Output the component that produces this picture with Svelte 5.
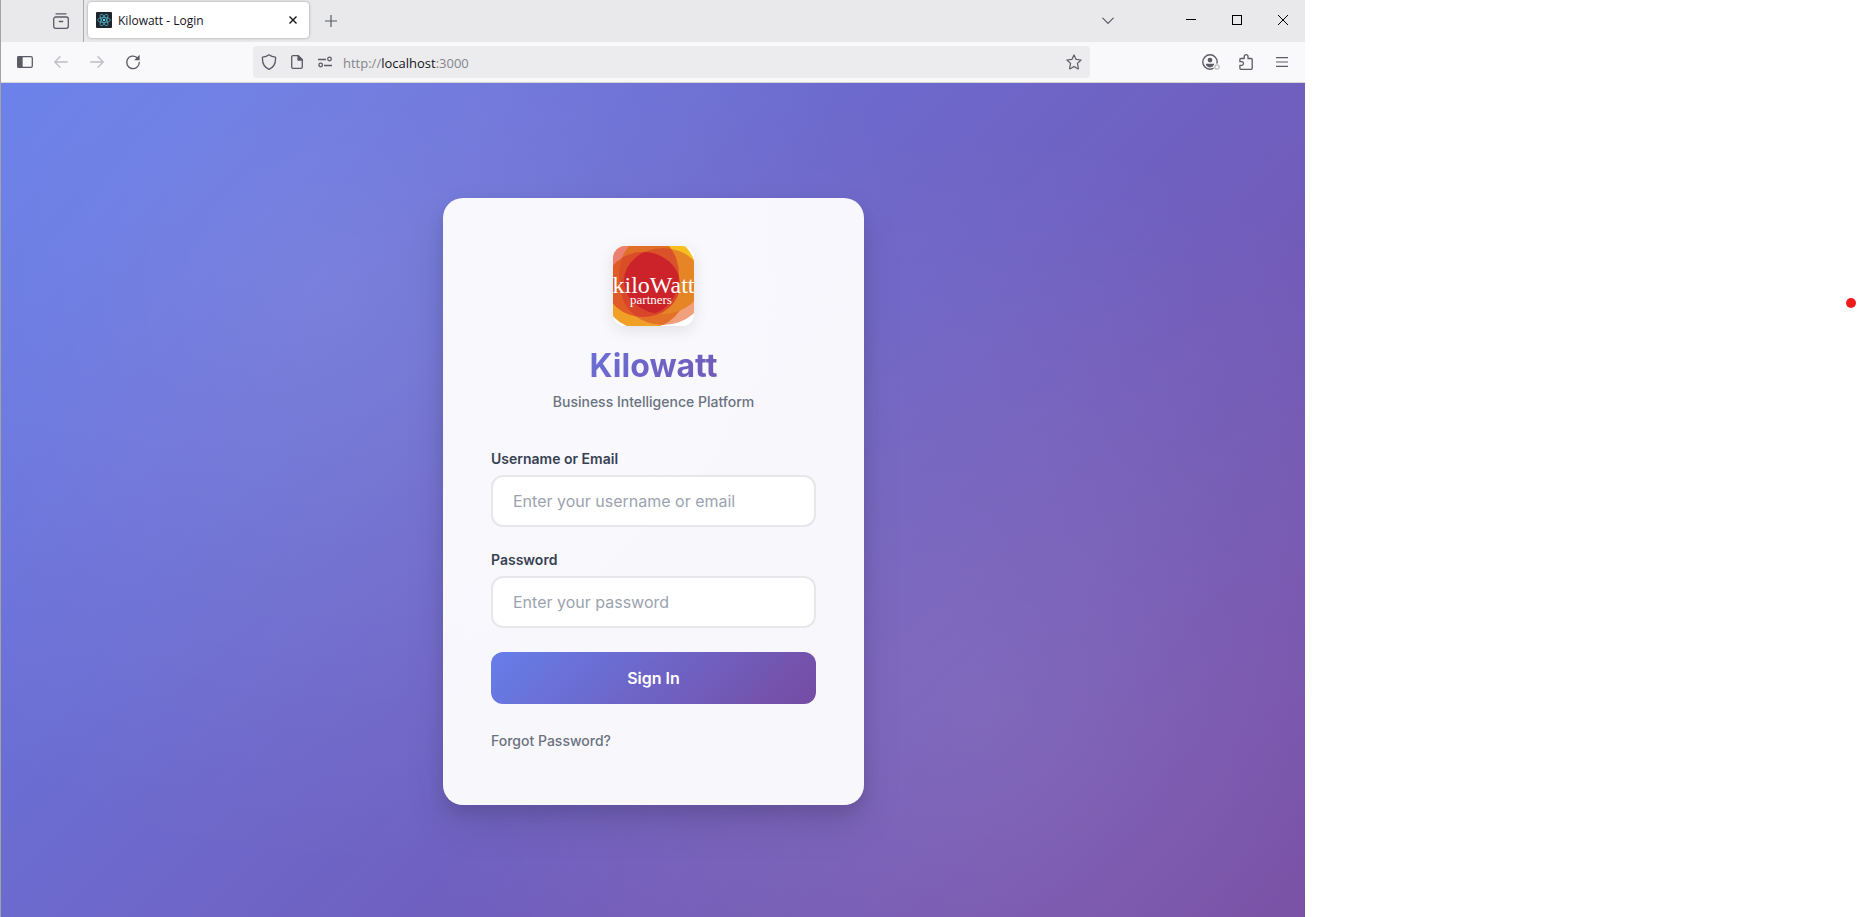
<script>
  let username = $state('');
  let password = $state('');
</script>

<svelte:head><title>Kilowatt - Login</title></svelte:head>

<div class="desktop">
  <div class="window">
    <header class="tabbar">
      <button class="tool" aria-label="Recent tabs">
        <svg width="16" height="16" viewBox="0 0 16 16" fill="none" stroke="#5b5b66" stroke-width="1.3" stroke-linecap="round">
          <path d="M3 0.8h10" />
          <path d="M0.700 6a2 2 0 0 1 2-2h10.600a2 2 0 0 1 2 2v7.300a2 2 0 0 1-2 2H2.700a2 2 0 0 1-2-2z" />
          <path d="M6.300 8.500h3.400" />
        </svg>
      </button>
      <div class="tab">
        <svg width="16" height="16" viewBox="0 0 16 16" fill="none" stroke="#4fb3cc" stroke-width="0.8">
          <rect width="16" height="16" rx="1" fill="#20232a" stroke="none" />
          <ellipse cx="8" cy="8" rx="6.4" ry="2.5" />
          <ellipse cx="8" cy="8" rx="6.4" ry="2.5" transform="rotate(60 8 8)" />
          <ellipse cx="8" cy="8" rx="6.4" ry="2.5" transform="rotate(120 8 8)" />
          <circle cx="8" cy="8" r="1.2" fill="#61dafb" stroke="none" />
        </svg>
        <span class="tab-title">Kilowatt - Login</span>
        <button class="tab-close" aria-label="Close tab">
          <svg width="8" height="8" viewBox="0 0 8 8" fill="none" stroke="#15141a" stroke-width="1.4"><path d="M0.5 0.5l7 7M7.5 0.5l-7 7" /></svg>
        </button>
      </div>
      <button class="tool" aria-label="New tab">
        <svg width="12" height="12" viewBox="0 0 12 12" fill="none" stroke="#5b5b66" stroke-width="1.2"><path d="M6 0v12M0 6h12" /></svg>
      </button>
      <span class="spacer"></span>
      <button class="tool all-tabs" aria-label="List all tabs">
        <svg width="12" height="8" viewBox="0 0 12 8" fill="none" stroke="#5b5b66" stroke-width="1.2" stroke-linecap="round" stroke-linejoin="round"><path d="M0.8 1.2L6 6.4l5.200-5.200" /></svg>
      </button>
      <button class="control" aria-label="Minimize">
        <svg width="10" height="10" viewBox="0 0 10 10" stroke="#000"><path d="M0 4.500h10" /></svg>
      </button>
      <button class="control" aria-label="Maximize">
        <svg width="10" height="10" viewBox="0 0 10 10" fill="none" stroke="#000"><rect x="0.5" y="0.5" width="9" height="9" /></svg>
      </button>
      <button class="control" aria-label="Close">
        <svg width="10" height="10" viewBox="0 0 10 10" stroke="#000"><path d="M0 0l10 10M10 0L0 10" /></svg>
      </button>
    </header>

    <nav class="toolbar" aria-label="Navigation">
      <button class="tool" aria-label="Sidebar">
        <svg width="16" height="12" viewBox="0 0 16 12" fill="none" stroke="#5b5b66" stroke-width="1.3"><rect x="0.7" y="0.7" width="14.600" height="10.600" rx="1.400" /><path d="M1 1h4v10H1z" fill="#5b5b66" /></svg>
      </button>
      <button class="tool" aria-label="Back" disabled>
        <svg width="14" height="12" viewBox="0 0 14 12" fill="none" stroke="#bdbdc3" stroke-width="1.3" stroke-linecap="round" stroke-linejoin="round"><path d="M13.300 6H0.9M6 0.8L0.800 6 6 11.200" /></svg>
      </button>
      <button class="tool" aria-label="Forward" disabled>
        <svg width="14" height="12" viewBox="0 0 14 12" fill="none" stroke="#bdbdc3" stroke-width="1.3" stroke-linecap="round" stroke-linejoin="round"><path d="M0.700 6h12.400M8 0.800L13.200 6 8 11.200" /></svg>
      </button>
      <button class="tool" aria-label="Reload">
        <svg width="16" height="16" viewBox="0 0 16 16" fill="none" stroke="#5b5b66" stroke-width="1.3" stroke-linecap="round"><path d="M14.300 8.300A6.300 6.300 0 1 1 11.900 3.400" /><path d="M14.600 0.800v5.400H9.200z" fill="#5b5b66" stroke="none" /></svg>
      </button>

      <div class="urlbar">
        <button class="chip" aria-label="Tracking protection">
          <svg width="16" height="16" viewBox="0 0 16 16" fill="none" stroke="#5b5b66" stroke-width="1.3" stroke-linejoin="round"><path d="M8 0.800C6.200 2.300 3.700 3 1.500 3.100 1.100 8.500 2.600 13 8 15.300 13.400 13 14.900 8.500 14.500 3.100 12.300 3 9.800 2.300 8 0.800z" /></svg>
        </button>
        <button class="chip" aria-label="Site information">
          <svg width="12" height="14" viewBox="0 0 12 14" fill="none" stroke="#5b5b66" stroke-width="1.300" stroke-linejoin="round"><path d="M2 0.700h5.300l4 4V12a1.300 1.300 0 0 1-1.300 1.300H2A1.300 1.300 0 0 1 0.700 12V2A1.300 1.300 0 0 1 2 0.700z" /><path d="M7 0.700v4.300h4.300z" fill="#5b5b66" /></svg>
        </button>
        <button class="chip" aria-label="Permissions">
          <svg width="14" height="12" viewBox="0 0 14 12" fill="none" stroke="#5b5b66" stroke-width="1.300"><path d="M0 3.500h8M6 9.500h8" /><circle cx="11.500" cy="3" r="1.800" /><circle cx="2.700" cy="9" r="1.800" /></svg>
        </button>
        <span class="address">http://<b>localhost</b>:3000</span>
        <button class="chip star" aria-label="Bookmark this page">
          <svg width="16" height="16" viewBox="0 0 16 16" fill="none" stroke="#5b5b66" stroke-width="1.200" stroke-linejoin="round"><path d="M8 0.900l2.100 4.500 5 .6-3.700 3.400 1 4.900a.5.5 0 0 1-.7.500L8 12.400l-3.700 2.400a.5.5 0 0 1-.7-.5l1-4.900L.9 6l5-.6z" /></svg>
        </button>
      </div>

      <button class="tool" aria-label="Account">
        <svg class="account" width="16" height="16" viewBox="0 0 16 16" fill="none"><circle cx="8" cy="8" r="7.200" stroke="#5b5b66" stroke-width="1.400" /><circle cx="8" cy="6.100" r="2.400" fill="#5b5b66" /><path d="M3.800 9.800h8.400c0 2-1.900 3.600-4.200 3.600s-4.200-1.600-4.200-3.600z" fill="#5b5b66" /><circle cx="15" cy="13" r="3.600" fill="#f9f9fb" /><circle cx="15" cy="13" r="2.200" stroke="#b9b9bf" stroke-width="1.200" /></svg>
      </button>
      <button class="tool" aria-label="Extensions">
        <svg width="14" height="16" viewBox="0 0 14 16" fill="none" stroke="#5b5b66" stroke-width="1.300" stroke-linejoin="round"><path d="M5.200 4.500V2.600a1.900 1.900 0 0 1 3.800 0v1.900h3.200a1 1 0 0 1 1 1v8.800a1 1 0 0 1-1 1H1.900a1 1 0 0 1-1-1v-3h1.800a1.800 1.800 0 0 0 0-3.600H.9V5.500a1 1 0 0 1 1-1z" /></svg>
      </button>
      <button class="tool" aria-label="Application menu">
        <svg width="12" height="10" viewBox="0 0 12 10" stroke="#5b5b66" stroke-width="1.200"><path d="M0 0.600h12M0 5h12M0 9.400h12" /></svg>
      </button>
    </nav>

    <main class="page">
      <form class="card" onsubmit={(e) => e.preventDefault()}>
        <svg class="logo" width="81" height="80" viewBox="0 0 81 80" role="img" aria-label="kiloWatt partners">
          <defs>
            <clipPath id="bottom"><circle cx="31" cy="40" r="43.500" /></clipPath>
            <clipPath id="left"><ellipse cx="30" cy="38.500" rx="37" ry="32.500" /></clipPath>
            <clipPath id="tall"><ellipse cx="36" cy="29" rx="30" ry="39" /></clipPath>
          </defs>
          <rect width="81" height="80" fill="#fff" />
          <circle cx="40" cy="30" r="44" fill="#f5bf1e" />
          <circle cx="6" cy="6" r="26" fill="#ec8070" />
          <path d="M0 20V70.500A43.500 43.500 0 0 0 14 80H48L66 60V20z" fill="#f0a024" />
          <ellipse cx="50" cy="42" rx="42" ry="37" fill="#f0a07c" />
          <g clip-path="url(#bottom)"><ellipse cx="50" cy="42" rx="42" ry="37" fill="#e27027" /></g>
          <ellipse cx="36" cy="29" rx="30" ry="39" fill="#e06f27" />
          <ellipse cx="50" cy="35" rx="39" ry="33" fill="#e58526" />
          <ellipse cx="30" cy="38.500" rx="37" ry="32.500" fill="#df5c26" />
          <g clip-path="url(#tall)">
            <ellipse cx="50" cy="35" rx="39" ry="33" fill="#da5229" />
            <ellipse cx="30" cy="38.500" rx="37" ry="32.500" fill="#d94d28" />
          </g>
          <g clip-path="url(#left)"><ellipse cx="50" cy="42" rx="42" ry="37" fill="#d8452a" /></g>
          <g clip-path="url(#left)"><g clip-path="url(#tall)"><ellipse cx="50" cy="35" rx="39" ry="33" fill="#cc2229" /></g></g>
          <text class="logo-name" x="40.500" y="47" text-anchor="middle">kiloWatt</text>
          <text class="logo-sub" x="38" y="58" text-anchor="middle">partners</text>
        </svg>
        <h1>Kilowatt</h1>
        <p class="tagline">Business Intelligence Platform</p>

        <div class="field">
          <label for="username">Username or Email</label>
          <input id="username" type="text" placeholder="Enter your username or email" bind:value={username} />
        </div>
        <div class="field">
          <label for="password">Password</label>
          <input id="password" type="password" placeholder="Enter your password" bind:value={password} />
        </div>
        <button class="submit" type="submit">Sign In</button>
        <a class="forgot" href="#forgot">Forgot Password?</a>
      </form>
    </main>
  </div>
  <aside class="outside"><span class="dot"></span></aside>
</div>

<style>
  :global(body) {
    background: #fff;
  }
  .desktop {
    display: grid;
    grid-template-columns: minmax(0, 1fr) 552px;
    min-height: 100vh;
  }
  .desktop * {
    box-sizing: border-box;
  }
  button {
    font: inherit;
    border: 0;
    padding: 0;
    background: none;
    display: flex;
    align-items: center;
    justify-content: center;
  }
  svg {
    display: block;
    flex: none;
  }
  .window {
    display: flex;
    flex-direction: column;
    border-left: 1px solid #a3a3a5;
    font-family: 'Open Sans', 'Noto Sans', sans-serif;
  }
  .tabbar {
    display: flex;
    align-items: center;
    height: 42px;
    padding-left: 42px;
    background: #e9e9eb;
  }
  .tool {
    width: 36px;
    height: 32px;
    flex: none;
  }
  .account {
    overflow: visible;
  }
  .tab {
    position: relative;
    display: flex;
    align-items: center;
    gap: 6px;
    width: 221px;
    height: 36px;
    margin: 0 4px 2px 9px;
    padding: 0 4px 0 8px;
    border-radius: 4px;
    background: #fff;
    box-shadow: 0 0 3px rgba(0, 0, 0, 0.35);
  }
  .tab::before {
    content: '';
    position: absolute;
    left: -5px;
    top: -2px;
    width: 1px;
    height: 42px;
    background: #a9a9ac;
  }
  .tab-title {
    flex: 1;
    font-size: 12px;
    color: #15141a;
  }
  .tab-close {
    width: 24px;
    height: 24px;
  }
  .spacer {
    flex: 1;
  }
  .all-tabs {
    margin-right: 41px;
  }
  .control {
    width: 46px;
    height: 32px;
    padding: 0 0 2px 2px;
  }
  .toolbar {
    display: flex;
    align-items: center;
    height: 41px;
    padding: 0 5px 0 6px;
    background: #f9f9fb;
    border-bottom: 1px solid #d4d4d8;
  }
  .urlbar {
    flex: 1;
    display: flex;
    align-items: center;
    height: 32px;
    margin: 0 102px;
    padding: 0 2px;
    border-radius: 4px;
    background: #ececee;
  }
  .chip {
    width: 28px;
    height: 28px;
    flex: none;
  }
  .address {
    flex: 1;
    padding: 2px 0 0 4px;
    font-size: 13px;
    color: #85858b;
  }
  .address b {
    font-weight: 400;
    color: #15141a;
  }
  .page {
    flex: 1;
    display: flex;
    align-items: center;
    justify-content: center;
    padding: 3px 0 0 1px;
    font-family: Inter, sans-serif;
    background:
      radial-gradient(circle at 25% 25%, rgba(255, 255, 255, 0.1) 0%, transparent 50%),
      radial-gradient(circle at 75% 75%, rgba(255, 255, 255, 0.1) 0%, transparent 50%),
      linear-gradient(135deg, #667eea 0%, #764ba2 100%);
  }
  .card {
    display: flex;
    flex-direction: column;
    width: 421px;
    padding: 48px;
    border-radius: 20px;
    background: rgba(255, 255, 255, 0.95);
    box-shadow:
      0 20px 40px rgba(0, 0, 0, 0.1),
      0 8px 16px rgba(0, 0, 0, 0.1);
  }
  .logo {
    align-self: center;
    border-radius: 12px;
    box-shadow: 0 4px 16px rgba(0, 0, 0, 0.1);
  }
  .logo text {
    font-family: 'Liberation Serif', serif;
    fill: #fff;
  }
  .logo-name {
    font-size: 24px;
  }
  .logo-sub {
    font-size: 13px;
  }
  h1 {
    margin: 20px 0 8px;
    font-size: 32px;
    line-height: 39px;
    font-weight: 700;
    text-align: center;
    color: transparent;
    background: linear-gradient(135deg, #667eea 0%, #764ba2 100%);
    background-clip: text;
    -webkit-background-clip: text;
  }
  .tagline {
    margin: 0 0 40px;
    font-size: 14px;
    line-height: 17px;
    font-weight: 500;
    text-align: center;
    color: #6b7280;
  }
  .field {
    display: flex;
    flex-direction: column;
    gap: 8px;
    margin-bottom: 24px;
  }
  label {
    font-size: 14px;
    line-height: 17px;
    font-weight: 600;
    color: #374151;
  }
  input {
    width: 100%;
    height: 52px;
    padding: 0 20px;
    border: 2px solid #e5e7eb;
    border-radius: 12px;
    background: #fff;
    font-family: inherit;
    font-size: 16px;
    color: #374151;
    outline: none;
  }
  input::placeholder {
    color: #9ca3af;
    opacity: 1;
  }
  .submit {
    height: 52px;
    border-radius: 12px;
    font-size: 16px;
    font-weight: 600;
    color: #fff;
    background: linear-gradient(135deg, #667eea 0%, #764ba2 100%);
  }
  .forgot {
    align-self: flex-start;
    margin-top: 20px;
    padding: 8px 0;
    font-size: 14px;
    line-height: 17px;
    font-weight: 500;
    color: #6b7280;
    text-decoration: none;
  }
  .outside {
    display: flex;
    justify-content: flex-end;
    padding: 298px 1px 0 0;
  }
  .dot {
    width: 10px;
    height: 10px;
    border-radius: 50%;
    background: #ee1c1c;
  }
</style>
